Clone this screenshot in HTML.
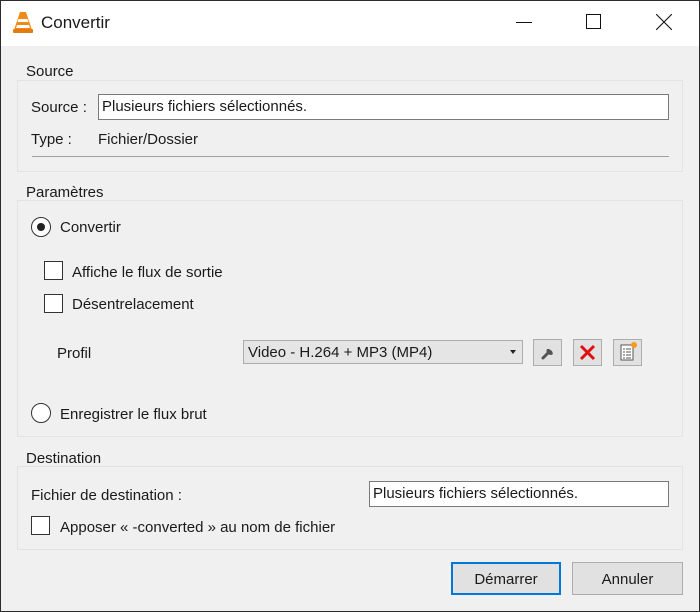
<!DOCTYPE html>
<html><head><meta charset="utf-8"><style>
*{margin:0;padding:0;box-sizing:border-box}
body{width:700px;height:612px;background:#f0f0f0;font-family:"Liberation Sans",sans-serif;font-size:15px;color:#1a1a1a;position:relative;overflow:hidden}
.a{position:absolute;white-space:nowrap}
.win{position:absolute;left:0;top:0;width:700px;height:612px;border:1px solid #2b2b2b;pointer-events:none}
.title{position:absolute;left:0;top:0;width:700px;height:46px;background:#fff}
.grp{position:absolute;border:1px solid #e3e3e3;background:#f0f0f0}
.inp{position:absolute;background:#fff;border:1px solid #7a7a7a;padding-left:3px;line-height:24px}
.cb{position:absolute;width:19px;height:19px;border:1px solid #333;background:#fff}
.rb{position:absolute;width:20px;height:20px;border:1px solid #333;border-radius:50%;background:#fff}
.btn{position:absolute;border:1px solid #adadad;background:#e1e1e1;text-align:center}
</style></head><body>
<div class="title"></div>
<svg class="a" style="left:12px;top:10px" width="22" height="24" viewBox="0 0 22 24"><path d="M8 2h6l6 18H2z" fill="#f08a16"/><path d="M6.5 9h9l1 3h-11zM5 15h12l1 3H4z" fill="#fff"/><rect x="1" y="19" width="20" height="4" rx="1" fill="#e57a10"/></svg>
<div class="a" style="left:41px;top:13px;font-size:17px">Convertir</div>
<div class="a" style="left:516px;top:22px;width:16px;height:1px;background:#111"></div>
<div class="a" style="left:586px;top:14px;width:15px;height:15px;border:1px solid #111"></div>
<svg class="a" style="left:656px;top:14px" width="16" height="16"><path d="M0 0L16 16M16 0L0 16" stroke="#111" stroke-width="1.1"/></svg>

<div class="grp" style="left:17px;top:80px;width:666px;height:92px"></div>
<div class="a" style="left:26px;top:63px">Source</div>
<div class="a" style="left:31px;top:99px">Source :</div>
<div class="inp" style="left:98px;top:94px;width:571px;height:26px">Plusieurs fichiers sélectionnés.</div>
<div class="a" style="left:31px;top:131px">Type :</div>
<div class="a" style="left:98px;top:131px">Fichier/Dossier</div>
<div class="a" style="left:32px;top:156px;width:637px;height:1px;background:#a0a0a0"></div>

<div class="grp" style="left:17px;top:200px;width:666px;height:237px"></div>
<div class="a" style="left:26px;top:184px">Paramètres</div>
<div class="rb" style="left:31px;top:217px"><div style="position:absolute;left:5px;top:5px;width:8px;height:8px;border-radius:50%;background:#222"></div></div>
<div class="a" style="left:60px;top:219px">Convertir</div>
<div class="cb" style="left:44px;top:261px"></div>
<div class="a" style="left:72px;top:264px">Affiche le flux de sortie</div>
<div class="cb" style="left:44px;top:294px"></div>
<div class="a" style="left:72px;top:296px">Désentrelacement</div>
<div class="a" style="left:57px;top:345px">Profil</div>
<div class="a" style="left:243px;top:340px;width:280px;height:24px;border:1px solid #adadad;background:#e5e5e5;padding-left:4px;line-height:23px">Video - H.264 + MP3 (MP4)<span style="position:absolute;right:6px;top:9px;border-left:3.5px solid transparent;border-right:3.5px solid transparent;border-top:4px solid #222"></span></div>
<div class="btn" style="left:533px;top:339px;width:29px;height:27px"><svg width="27" height="25" viewBox="0 0 27 25"><path d="M9 18l6-6" stroke="#555" stroke-width="3" stroke-linecap="round"/><path d="M13 9a4 4 0 0 0 6 5l-1-3-3-2z" fill="#555"/></svg></div>
<div class="btn" style="left:573px;top:339px;width:29px;height:27px"><svg width="27" height="25"><path d="M7 6L20 19M20 6L7 19" stroke="#e01010" stroke-width="3"/></svg></div>
<div class="btn" style="left:613px;top:339px;width:29px;height:27px"><svg width="27" height="25"><rect x="7" y="5" width="12" height="15" fill="#fff" stroke="#555"/><path d="M9 9h2M12 9h5M9 12h2M12 12h5M9 15h2M12 15h5M9 18h2M12 18h5" stroke="#555"/><circle cx="20" cy="5" r="3" fill="#f59a1a"/></svg></div>
<div class="rb" style="left:31px;top:403px"></div>
<div class="a" style="left:60px;top:406px">Enregistrer le flux brut</div>

<div class="grp" style="left:17px;top:466px;width:666px;height:84px"></div>
<div class="a" style="left:26px;top:450px">Destination</div>
<div class="a" style="left:31px;top:487px">Fichier de destination :</div>
<div class="inp" style="left:369px;top:481px;width:300px;height:26px">Plusieurs fichiers sélectionnés.</div>
<div class="cb" style="left:31px;top:516px"></div>
<div class="a" style="left:60px;top:519px">Apposer « -converted » au nom de fichier</div>

<div class="btn" style="left:451px;top:562px;width:110px;height:33px;border:2px solid #0078d7;line-height:31px">Démarrer</div>
<div class="btn" style="left:572px;top:562px;width:111px;height:33px;line-height:33px">Annuler</div>
<div class="win"></div>
</body></html>
